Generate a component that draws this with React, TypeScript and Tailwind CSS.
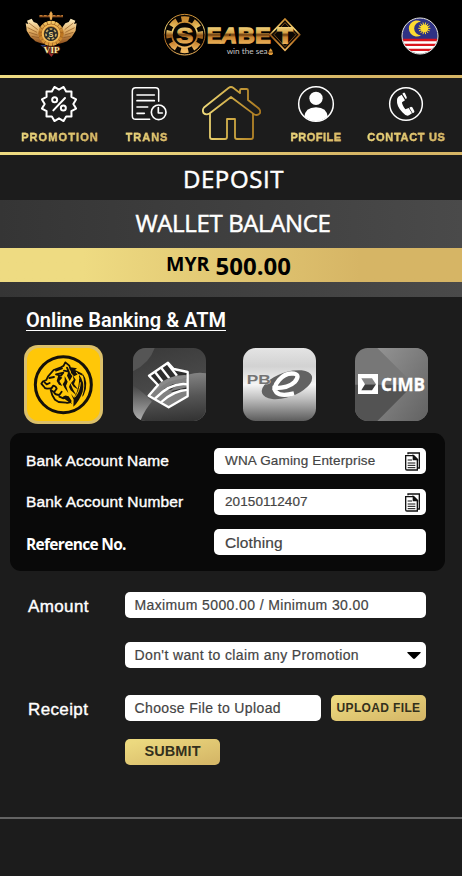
import type { ReactNode } from "react";

const ARIAL = "font-['Liberation_Sans',Arial,sans-serif]";
const HUMANIST = "font-['Open_Sans','Noto_Sans',sans-serif]";
const GOLD = "bg-linear-to-r from-[#eedb82] from-18% to-[#d6b565] to-78%";
const GOLD_BUTTON = "bg-linear-to-br from-[#ecd97f] from-10% to-[#d6b868] to-90%";

function VipBadge() {
  return (
    <svg className="h-[46px] w-[52px]" viewBox="76 34 156 138">
      <defs>
        <linearGradient id="wing" x1="0" y1="0" x2="0" y2="1">
          <stop offset="0" stopColor="#fff0c4" />
          <stop offset="0.5" stopColor="#e0ac62" />
          <stop offset="1" stopColor="#8a4a18" />
        </linearGradient>
        <linearGradient id="ring" x1="0" y1="0" x2="0" y2="1">
          <stop offset="0" stopColor="#f4c868" />
          <stop offset="0.5" stopColor="#b8701c" />
          <stop offset="1" stopColor="#e0a040" />
        </linearGradient>
      </defs>
      <g id="left-wing">
        <path fill="url(#wing)" d="M96 57 l6 10 10 4 6 8 5 8 -4 16 4 14 10 16 -14 -4 -12 -4 -6 -6 -8 -6 -6 -10 -6 -10 -1 -10 -2 -12 8 2 -4 -10 z" />
        <path stroke="#8a5520" strokeWidth="2" fill="none" d="M88 70l26 20M84 84l28 14M88 98l26 8M96 110l22 4" />
      </g>
      <use href="#left-wing" transform="translate(309 0) scale(-1 1)" />
      <path stroke="#8a4d1c" strokeWidth="6" d="M119 50h71" />
      <path stroke="#d0883c" strokeWidth="3" strokeDasharray="8 5" d="M120 48h70" />
      <path fill="#e8a850" d="M154 34l5 8-2 18h-6l-2-18z" />
      <path fill="#96282c" d="M130 140l25 32 25-32z" />
      <path fill="#283a78" d="M122 136l16 0 0 14z" />
      <circle cx="154" cy="101" r="37" fill="#9a5a1c" />
      <circle cx="154" cy="101" r="33" fill="none" stroke="url(#ring)" strokeWidth="9" strokeDasharray="10 2" />
      <circle cx="154" cy="102" r="25" fill="none" stroke="#f2bb58" strokeWidth="6" />
      <circle cx="154" cy="103" r="21" fill="#242a2a" />
      <circle cx="154" cy="103" r="15" fill="none" stroke="#c9a960" strokeWidth="5" strokeDasharray="8 5" />
      <text x="154" y="111" textAnchor="middle" fill="#f1d88d" className="font-['Liberation_Sans',sans-serif] text-[22px] font-bold">S</text>
      <text x="156" y="159" textAnchor="middle" textLength="47" lengthAdjust="spacingAndGlyphs" fill="#fff0a8" stroke="#4d2510" strokeWidth="4" paintOrder="stroke" className="font-['Liberation_Serif',serif] text-[25px] font-bold">VIP</text>
    </svg>
  );
}

function SeabetLogo() {
  return (
    <svg className="h-[44px] w-[138px]" viewBox="28 39 414 132">
      <defs>
        <linearGradient id="metal" x1="0" y1="0" x2="0" y2="1">
          <stop offset="0" stopColor="#c98a30" />
          <stop offset="0.35" stopColor="#f6d878" />
          <stop offset="0.52" stopColor="#8f5418" />
          <stop offset="0.72" stopColor="#c07a28" />
          <stop offset="1" stopColor="#f0b860" />
        </linearGradient>
        <linearGradient id="letters" gradientUnits="userSpaceOnUse" x1="0" y1="76" x2="0" y2="133">
          <stop offset="0" stopColor="#f8e08c" />
          <stop offset="0.38" stopColor="#d9a548" />
          <stop offset="0.5" stopColor="#6b3c10" />
          <stop offset="0.62" stopColor="#c98530" />
          <stop offset="1" stopColor="#edb45c" />
        </linearGradient>
      </defs>
      <circle cx="93" cy="104" r="61" fill="#080502" stroke="url(#metal)" strokeWidth="3" />
      <circle cx="93" cy="104" r="46" fill="none" stroke="url(#metal)" strokeWidth="19" strokeDasharray="22 14.13" strokeDashoffset="11" />
      <circle cx="93" cy="104" r="38" fill="#080502" stroke="url(#metal)" strokeWidth="5" />
      <text x="93" y="128" textAnchor="middle" textLength="51" lengthAdjust="spacingAndGlyphs" fill="url(#letters)" stroke="url(#letters)" strokeWidth="3" className="font-['Liberation_Sans',sans-serif] text-[68px] font-bold">S</text>
      <g fill="url(#letters)" stroke="url(#letters)" strokeWidth="5" className="font-['Liberation_Sans',sans-serif] text-[68px] font-bold">
        <text x="160" y="130" textLength="43" lengthAdjust="spacingAndGlyphs">E</text>
        <text x="203" y="130" textLength="47" lengthAdjust="spacingAndGlyphs" className="italic">A</text>
        <text x="253" y="130" textLength="50" lengthAdjust="spacingAndGlyphs">B</text>
        <text x="305" y="130" textLength="46" lengthAdjust="spacingAndGlyphs">E</text>
      </g>
      <path d="M394 57L438 104L394 151L349 104Z" fill="#0b0703" stroke="url(#metal)" strokeWidth="5" />
      <path d="M394 68L427 104L394 140L361 104Z" fill="none" stroke="#a86c25" strokeWidth="2" />
      <text x="394" y="129" textAnchor="middle" textLength="44" lengthAdjust="spacingAndGlyphs" fill="url(#letters)" stroke="url(#letters)" strokeWidth="6" className="font-['Liberation_Sans',sans-serif] text-[66px] font-bold">T</text>
      <text x="219" y="162" textLength="123" lengthAdjust="spacingAndGlyphs" fill="#c4c4c4" className="font-['Lato',sans-serif] text-[23px]">win the sea</text>
      <path fill="#e09a38" d="M351 145l5 7 2 8-3 5h-8l-3-5 2-8z" />
      <path stroke="#1a0d02" strokeWidth="2" d="M344 156h14" />
    </svg>
  );
}

function MalaysiaFlag() {
  const rays = Array.from({ length: 14 }, (_, i) => {
    const a = (i / 14) * Math.PI * 2;
    return `M350 86L${(350 + 18 * Math.cos(a)).toFixed(1)} ${(86 + 18 * Math.sin(a)).toFixed(1)}`;
  }).join("");
  return (
    <svg className="size-[38px]" viewBox="280 52 114 114">
      <defs>
        <clipPath id="flag-disc"><circle cx="337" cy="109" r="53" /></clipPath>
      </defs>
      <g clipPath="url(#flag-disc)">
        <path fill="#2f3284" d="M280 52h114v66H280z" />
        <path fill="#fff" d="M280 118h114v50H280z" />
        <path fill="#d9141c" d="M280 117h114v8H280zM280 132h114v7H280zM280 147h114v7H280z" />
      </g>
      <path fill="#fddb32" d="M340 66a24 24 0 1 0 0 41a20 20 0 1 1 0-41z" />
      <path stroke="#fddb32" strokeWidth="3" d={rays} />
      <circle cx="350" cy="86" r="11.5" fill="#fddb32" />
      <circle cx="337" cy="109" r="54" fill="none" stroke="#eee" strokeWidth="3" />
    </svg>
  );
}

function PromotionIcon() {
  const points = 12;
  const seal = Array.from({ length: points * 2 }, (_, i) => {
    const a = (i / (points * 2)) * Math.PI * 2 - Math.PI / 2 + Math.PI / points;
    const r = i % 2 === 0 ? 53 : 43;
    return `${(176 + r * Math.cos(a)).toFixed(1)},${(87 + r * Math.sin(a)).toFixed(1)}`;
  }).join(" ");
  return (
    <svg className="size-[38px]" viewBox="119 30 114 114" fill="none" stroke="#fff" strokeWidth="6" strokeLinecap="round" strokeLinejoin="round">
      <polygon points={seal} />
      <path d="M194 69L159 106" />
      <circle cx="163" cy="74" r="7.5" />
      <circle cx="189" cy="99" r="7.5" />
    </svg>
  );
}

function TransIcon() {
  return (
    <svg className="h-[36px] w-[37px]" viewBox="395 36 111 108" fill="none" stroke="#fff" strokeWidth="5" strokeLinecap="round" strokeLinejoin="round">
      <path d="M478 82V50q0-9-9-9h-60q-10 0-10 10v75q0 10 10 10h42" strokeWidth="4.5" />
      <path d="M413 63h52M413 80h52M413 99h32M413 118h22" />
      <circle cx="478" cy="115" r="22" />
      <path d="M477 101v16h12" />
    </svg>
  );
}

function HomeIcon() {
  return (
    <svg className="h-[56px] w-[60px]" viewBox="201 85 60 56" fill="none" stroke="url(#home-gold)" strokeWidth="1.8" strokeLinejoin="round">
      <defs>
        <linearGradient id="home-gold" gradientUnits="userSpaceOnUse" x1="202" y1="0" x2="261" y2="0">
          <stop offset="0" stopColor="#efdb7c" />
          <stop offset="0.5" stopColor="#d0ab45" />
          <stop offset="1" stopColor="#a8751d" />
        </linearGradient>
      </defs>
      <path d="M204 107.5L228.5 88q2.5-2 5 0l6.500 5.100V90.500q0-1.500 1.500-1.500h5q1.500 0 1.500 1.500V100l10.500 8.200q3 3.300 1 5.500q-2.500 2.500-6 .200L231 97L209.500 113.500q-3.500 2-6-.5q-1.500-3 .5-5.500z" />
      <path d="M210 113.500V137q0 2 2 2h13q2 0 2-2V119h8v18q0 2 2 2h14q2 0 2-2V113.500" />
    </svg>
  );
}

function ProfileIcon() {
  return (
    <svg className="size-[38px]" viewBox="198 33 114 114">
      <defs>
        <clipPath id="profile-disc"><circle cx="255" cy="90" r="51" /></clipPath>
      </defs>
      <circle cx="255" cy="90" r="52" fill="none" stroke="#fff" strokeWidth="4.5" />
      <circle cx="255" cy="73" r="20" fill="#fff" />
      <path clipPath="url(#profile-disc)" fill="#fff" d="M219 145v-14q3-31 36-31t36 31v14z" />
    </svg>
  );
}

function ContactIcon() {
  return (
    <svg className="size-[36px]" viewBox="471 36 108 108">
      <circle cx="525" cy="90" r="49" fill="none" stroke="#fff" strokeWidth="4.500" />
      <path fill="#fff" d="M502 68l10-6 10 17-9 6q0 8 10 21l10-4 10 16-9 6q-9 4-20-9q-18-19-16-37q0-6 4-10z" />
      <path fill="#fff" d="M514 59l4-3q2-1 4 2l5 11q1 3-1 5l-2 1zM535 101l5-3q2 0 4 2l6 11q1 3-2 5l-3 2z" />
    </svg>
  );
}

function NavItem({ icon, label, className }: { icon: ReactNode; label: string; className: string }) {
  return (
    <a className="flex flex-col items-center">
      <span className="flex h-[51px] items-center">{icon}</span>
      <span className={`bg-linear-to-r from-[#eddb80] to-[#d6b565] bg-clip-text text-[11px] leading-4 font-bold whitespace-nowrap text-transparent [-webkit-text-stroke:0.3px_#e0c570] ${ARIAL} ${className}`}>
        {label}
      </span>
    </a>
  );
}

function MaybankTile() {
  return (
    <svg className="size-[79px]" viewBox="42 27 237 237">
      <rect x="42" y="27" width="237" height="237" rx="42" fill="#dcc06a" />
      <rect x="51" y="36" width="219" height="219" rx="36" fill="#ffc708" />
      <circle cx="160" cy="146" r="84" fill="none" stroke="#15110a" strokeWidth="9" />
      <g fill="none" stroke="#15110a" strokeWidth="5.5" strokeLinecap="round" strokeLinejoin="round">
        <path d="M124 157l-13 1q-8-1-10-7l-7-8 4-6 11-5q4-12 13-20l9-10 22-8 8-5 5-10 12 10 4 12" />
        <path d="M171 95l5 12-14-3M138 104l18-7M138 115l22-5-7 9zM118 126l14-3M104 139l6 6 9-4" />
        <path d="M124 157l6-8q8 1 10 9l-8 11q4 8 16 8l7-10M132 168l-10-6 5 16 8 13 11 7 22 2q10 3 14-5l-8-12-14 4-12-5" />
      </g>
      <g fill="#15110a">
        <path d="M181 94l20 3-6 5 20 10 5 8-14-6-14 7-9-10z" />
        <path d="M176 104l11 17-8 14-8-16zM164 120l9 17-5 12 7 22-11-15-6-11 6-10z" />
        <path d="M188 117l9 14-5 13 13 17-14-9-8-11 8-10zM181 142l8 18 10 18-17-15-5-10z" />
        <path d="M207 116q18 21 11 51-10 29-28 45l1-21-8-18 9 12q18-28 15-69z" />
        <path d="M145 118l12 7-9 10 9 15-10-4-7-11zM217 111q22 29 4 67l-5 5q13-32 1-72z" />
        <path d="M157 184q13-13 22 6l7 14-13-8z" />
      </g>
      <path fill="none" stroke="#ffc708" strokeWidth="3" d="M211 139q-2 28-17 45M199 108q6 6 8 20" />
    </svg>
  );
}

function HongLeongTile() {
  return (
    <svg className="size-[73px]" viewBox="369 36 219 219">
      <defs>
        <linearGradient id="hl-bg" x1="0.3" y1="0" x2="0.6" y2="1">
          <stop offset="0" stopColor="#3b3b3b" />
          <stop offset="0.5" stopColor="#484848" />
          <stop offset="1" stopColor="#7e7e7e" />
        </linearGradient>
        <linearGradient id="hl-wave" x1="0.6" y1="0" x2="0.7" y2="1">
          <stop offset="0" stopColor="#858585" />
          <stop offset="0.5" stopColor="#555" />
          <stop offset="1" stopColor="#333" />
        </linearGradient>
        <linearGradient id="hl-left" x1="0" y1="0" x2="0" y2="1">
          <stop offset="0" stopColor="#454545" />
          <stop offset="1" stopColor="#b0b0b0" />
        </linearGradient>
        <clipPath id="hl-clip"><rect x="369" y="36" width="219" height="219" rx="38" /></clipPath>
      </defs>
      <g clipPath="url(#hl-clip)">
        <path fill="url(#hl-bg)" d="M369 36h219v219H369z" />
        <path fill="#555" d="M369 36h65q-15 45-65 70z" />
        <path fill="url(#hl-left)" d="M369 148q38 25 67 62q-28 19-44 45h-23z" />
        <path fill="url(#hl-wave)" d="M391 255q25-67 111-125 44-25 86-18v143z" />
      </g>
      <path fill="#2c2c2c" d="M417 119l57-39 17 19 42 9v73l-57 33-60-35 28-32z" />
      <path fill="#808080" d="M417 178q59-58 116-50v53l-57 31-60-34z" />
      <path fill="#2c2c2c" d="M462 158l26-13 20-4-25 20zM488 164l43-10v13h-48z" />
      <g fill="none" stroke="#fff" strokeWidth="7" strokeLinejoin="round">
        <path d="M435 108l24 31M454 96l24 31M473 83l28 36M435 188q49-51 98-43M454 198q40-36 79-36" />
        <path stroke="#8a8a8a" strokeWidth="11" d="M434 160q44-40 96-37" />
        <path d="M417 119l57-39 17 19 42 9v73l-57 33-60-35 28-32z" />
      </g>
    </svg>
  );
}

function PublicBankTile() {
  return (
    <svg className="size-[73px]" viewBox="39 36 219 219">
      <defs>
        <linearGradient id="pb-bg" x1="0" y1="0" x2="0" y2="1">
          <stop offset="0" stopColor="#e4e4e4" />
          <stop offset="0.25" stopColor="#d2d2d2" />
          <stop offset="0.5" stopColor="#f5f5f5" />
          <stop offset="0.7" stopColor="#bdbdbd" />
          <stop offset="1" stopColor="#5c5c5c" />
        </linearGradient>
      </defs>
      <rect x="39" y="36" width="219" height="219" rx="38" fill="url(#pb-bg)" />
      <ellipse cx="171" cy="146" rx="79" ry="37" transform="rotate(-19 171 146)" fill="#626262" />
      <text x="50" y="145" textLength="72" lengthAdjust="spacingAndGlyphs" fill="#747474" stroke="#e9e9e9" strokeWidth="2" paintOrder="stroke" className="font-['Liberation_Sans',sans-serif] text-[37px] font-bold">PB</text>
      <path fill="none" stroke="#fff" strokeWidth="13" d="M127 156q47 2 67-18 18-21-2-25-25-4-45 19-20 24-8 37 14 13 53 3" />
    </svg>
  );
}

function CimbTile() {
  return (
    <svg className="size-[73px]" viewBox="375 36 219 219">
      <defs>
        <linearGradient id="cimb-top" x1="0" y1="0" x2="1" y2="1">
          <stop offset="0" stopColor="#939393" />
          <stop offset="1" stopColor="#626262" />
        </linearGradient>
        <clipPath id="cimb-clip"><rect x="375" y="36" width="219" height="219" rx="38" /></clipPath>
      </defs>
      <g clipPath="url(#cimb-clip)">
        <path fill="#777" d="M375 36h219v219H375z" />
        <path fill="url(#cimb-top)" d="M442 36h152v219H442l108-112z" />
        <path fill="#535353" d="M375 146h175L442 255h-67z" />
      </g>
      <path fill="#fff" d="M384 114h60v60h-60z" />
      <path fill="#858585" d="M394 127h32l12 18h-33z" />
      <path fill="#3c3c3c" d="M405 145h33l-12 18h-32z" />
      <text x="453" y="165" textLength="132" lengthAdjust="spacingAndGlyphs" fill="#fff" stroke="#fff" strokeWidth="1" className="font-['Open_Sans',sans-serif] text-[55px] font-bold">CIMB</text>
    </svg>
  );
}

function CopyIcon() {
  return (
    <svg className="h-[19px] w-[16px]" viewBox="600 62 48 57" fill="none" stroke="#111" strokeWidth="4">
      <path d="M609 69v-4h34v45h-5" />
      <path fill="#fff" d="M602 73h24l11 11v32h-31q-4 0-4-4z" />
      <path fill="#111" d="M625 73v12h12z" />
      <path d="M608 86h13M608 95h23M608 102h23M608 109h23" strokeWidth="3" />
    </svg>
  );
}

function Field({ children, className = "" }: { children: ReactNode; className?: string }) {
  return (
    <div className={`flex h-[26px] items-center justify-between rounded-[5px] bg-white pl-[9.5px] whitespace-nowrap text-[#444] [-webkit-text-stroke:0.2px_#444] ${ARIAL} ${className}`}>
      {children}
    </div>
  );
}

export default function App() {
  return (
    <main className={`flex h-[876px] w-[462px] flex-col overflow-hidden bg-[#1c1c1c] text-white ${ARIAL}`}>
      <header className="flex h-[75px] shrink-0 items-start bg-black pl-[25px]">
        <div className="pt-[11px]"><VipBadge /></div>
        <div className="ml-[86px] pt-[13px]"><SeabetLogo /></div>
        <div className="ml-[100px] pt-[17px]"><MalaysiaFlag /></div>
      </header>
      <div className={`h-[3px] shrink-0 ${GOLD}`} />
      <nav className="grid h-[74px] shrink-0 grid-cols-[120px_54px_112px_60px_116px]">
        <NavItem icon={<span className="pr-[3px]"><PromotionIcon /></span>} label="PROMOTION" className="tracking-[1.1px]" />
        <NavItem icon={<span className="pl-[4px]"><TransIcon /></span>} label="TRANS" className="tracking-[1px]" />
        <a className="flex justify-center pt-[7px] pl-0.5"><HomeIcon /></a>
        <NavItem icon={<ProfileIcon />} label="PROFILE" className="tracking-[0.5px]" />
        <NavItem icon={<span className="pl-1"><ContactIcon /></span>} label="CONTACT US" className="pl-[5px] tracking-[0.7px]" />
      </nav>
      <div className={`h-[3px] shrink-0 ${GOLD}`} />

      <h1 className={`flex h-[45px] shrink-0 items-center justify-center pt-[3px] pl-[5px] text-[24px] font-medium tracking-[0.6px] [-webkit-text-stroke:0.5px_#fff] ${HUMANIST}`}>DEPOSIT</h1>

      <section className="flex h-[97px] shrink-0 flex-col bg-linear-to-r from-[#353535] to-[#4a4a4a]">
        <h2 className={`flex h-[48px] items-center justify-center pb-[3px] pl-[4px] text-[24px] font-medium tracking-[-0.35px] [-webkit-text-stroke:0.5px_#fff] ${HUMANIST}`}>WALLET BALANCE</h2>
        <div className={`flex h-[34px] items-start justify-center gap-[6px] pr-[5px] font-bold text-black ${GOLD} ${HUMANIST}`}>
          <span className="pt-[3px] text-[19.5px] leading-[26px]">MYR</span>
          <span className="pt-px text-[24px] leading-[34px]">500.00</span>
        </div>
      </section>

      <section className="flex shrink-0 flex-col pt-[12px]">
        <h3 className="ml-[26px] flex h-[22px] w-[200px] items-center border-b-[1.5px] border-white font-['Roboto',sans-serif] text-[20px] font-semibold whitespace-nowrap">
          Online Banking &amp; ATM
        </h3>
        <div className="mt-[14px] flex h-[79px] items-center pl-[24px]">
          <MaybankTile />
          <div className="ml-[30px]"><HongLeongTile /></div>
          <div className="ml-[37px]"><PublicBankTile /></div>
          <div className="ml-[39px]"><CimbTile /></div>
        </div>
      </section>

      <section className="mt-[9px] ml-[10px] flex h-[138px] w-[435px] shrink-0 flex-col rounded-[11px] bg-[#090909] pt-[15px] pr-[19px] pl-[16px] text-[15.5px]">
        <div className="flex items-center justify-between">
          <span className="leading-none tracking-[0.15px] [-webkit-text-stroke:0.4px_#fff]">Bank Account Name</span>
          <Field className="w-[212px] pr-[5px] pl-[11px] text-[13.5px] tracking-[0.16px]">WNA Gaming Enterprise<CopyIcon /></Field>
        </div>
        <div className="mt-[15px] flex items-center justify-between">
          <span className="leading-none tracking-[0.17px] [-webkit-text-stroke:0.4px_#fff]">Bank Account Number</span>
          <Field className="w-[212px] pr-[5px] pl-[11px] text-[13.5px] tracking-[0.1px]">20150112407<CopyIcon /></Field>
        </div>
        <div className="mt-[14px] flex items-center justify-between">
          <span className={`pt-[6px] text-[15.5px] leading-none font-bold tracking-[-0.68px] ${HUMANIST}`}>Reference No.</span>
          <Field className="w-[212px] pt-[2px] pl-[11px] text-[15.5px] tracking-[0.1px]">Clothing</Field>
        </div>
      </section>

      <form className="mt-[21px] flex shrink-0 flex-col pr-[36px] pl-[28px] text-[14px] tracking-[0.38px]">
        <div className="flex items-center">
          <label className="w-[97px] pt-[3px] text-[17px] leading-none [-webkit-text-stroke:0.4px_#fff]">Amount</label>
          <Field className="w-[301px]">Maximum 5000.00 / Minimum 30.00</Field>
        </div>
        <div className="mt-[24px] flex pl-[97px]">
          <Field className="w-[301px] pr-[5px]">
            Don't want to claim any Promotion
            <svg className="h-[7px] w-[14px]" viewBox="0 0 14 7"><path d="M.5 0h13q.3.500 0 1L8 6.600q-1 .6-2 0L.5 1q-.3-.5 0-1z" fill="#000" /></svg>
          </Field>
        </div>
        <div className="mt-[27px] flex items-center">
          <label className="w-[97px] pt-[3px] text-[17px] leading-none [-webkit-text-stroke:0.4px_#fff]">Receipt</label>
          <Field className="w-[196px]">Choose File to Upload</Field>
          <button type="button" className={`ml-[10px] h-[26px] w-[95px] rounded-[5px] text-[12px] font-bold tracking-[0.35px] whitespace-nowrap text-[#33301c] ${GOLD_BUTTON}`}>UPLOAD FILE</button>
        </div>
        <div className="mt-[18px] flex pl-[97px]">
          <button type="button" className={`h-[26px] w-[95px] rounded-[5px] text-[14.5px] font-bold tracking-[0.1px] text-[#33301c] ${GOLD_BUTTON}`}>SUBMIT</button>
        </div>
      </form>
      <div className="mt-[52px] h-[2px] shrink-0 bg-[#636363]" />
    </main>
  );
}
